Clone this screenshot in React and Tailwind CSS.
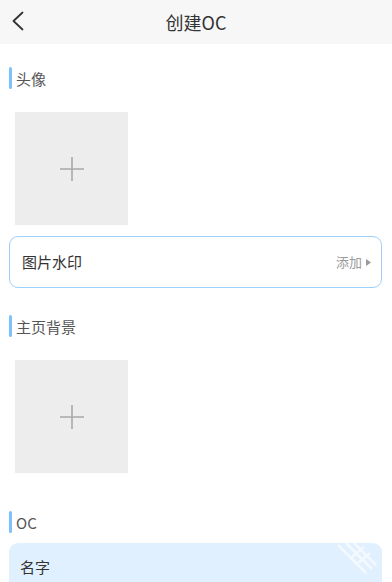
import React from "react";

const font = { fontFamily: '"Noto Sans CJK SC", "Noto Sans", sans-serif' };

function Label({ text, className = "" }) {
  return (
    <div className={"flex items-center ml-[9px] h-[22px] " + className}>
      <div className="w-[3px] h-[22px] rounded-full bg-[#7ec1fb]" />
      <span className="ml-[4px] text-[15px] leading-none text-[#555]">{text}</span>
    </div>
  );
}

function AddBox({ className = "" }) {
  return (
    <div className={"ml-[15px] w-[113px] h-[113px] bg-[#ededed] flex items-center justify-center " + className}>
      <svg width="26" height="26" viewBox="0 0 26 26">
        <path d="M13 1 V25 M1 13 H25" stroke="#a8a8a8" strokeWidth="1.6" fill="none" />
      </svg>
    </div>
  );
}

export default function App() {
  return (
    <div className="w-[392px] h-[582px] bg-white overflow-hidden" style={font}>
      <div className="relative h-[44px] bg-[#f7f7f7] flex items-center justify-center">
        <svg className="absolute left-[11px] top-[11px]" width="14" height="20" viewBox="0 0 14 20">
          <path d="M11.5 1.5 L2.5 10 L11.5 18.5" stroke="#333" strokeWidth="1.8" fill="none" strokeLinecap="round" strokeLinejoin="round" />
        </svg>
        <span className="text-[18px] text-[#333] leading-none">创建OC</span>
      </div>

      <Label text="头像" className="mt-[23px]" />
      <AddBox className="mt-[23px]" />

      <div className="mt-[11px] mx-[9px] w-[373px] h-[52px] border-[1.5px] border-[#9fcffb] rounded-[9px] flex items-center justify-between pl-[12px] pr-[10px]">
        <span className="text-[15px] text-[#333]">图片水印</span>
        <span className="flex items-center text-[13px] text-[#9a9a9a]">
          添加
          <svg className="ml-[4px]" width="5" height="7" viewBox="0 0 5 7">
            <path d="M0 0 L5 3.5 L0 7 Z" fill="#9a9a9a" />
          </svg>
        </span>
      </div>

      <Label text="主页背景" className="mt-[27px]" />
      <AddBox className="mt-[23px]" />

      <Label text="OC" className="mt-[38px]" />

      <div className="relative mt-[10px] mx-[9px] w-[373px] h-[60px] bg-[#e0f0fe] rounded-t-[9px] overflow-hidden">
        <span className="absolute left-[11px] top-[13px] text-[15px] text-[#333]">名字</span>
        <svg className="absolute right-[4px] top-[0px]" width="46" height="34" viewBox="0 0 46 34">
          <g stroke="#ffffff" strokeWidth="2.5" opacity="0.6" fill="none">
            <path d="M6 2 L34 30" />
            <path d="M14 0 L40 26" />
            <path d="M22 0 L44 22" />
            <path d="M20 14 L32 4" />
            <path d="M26 20 L38 10" />
          </g>
        </svg>
      </div>
    </div>
  );
}
